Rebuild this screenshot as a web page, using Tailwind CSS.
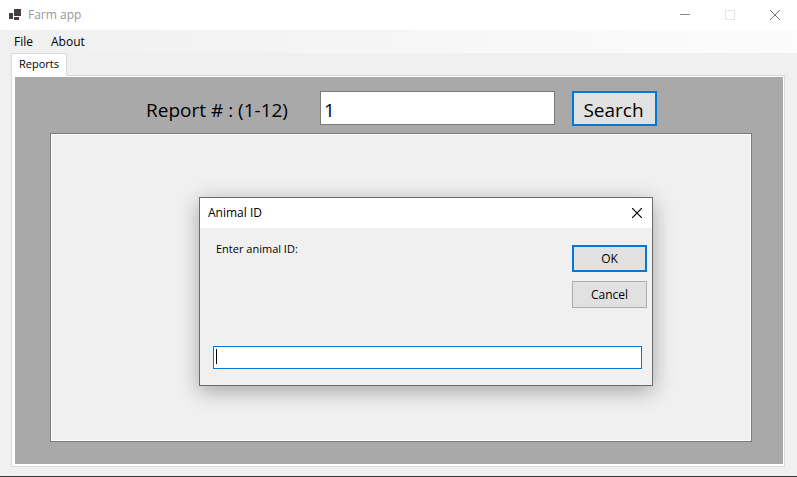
<!DOCTYPE html>
<html lang="en">
<head>
<meta charset="utf-8">
<title>Farm app</title>
<script src="https://cdn.jsdelivr.net/npm/@tailwindcss/browser@4"></script>
</head>
<body class="relative flex min-h-screen flex-col border-b border-[#333333] bg-[#f0f0f0] font-['Open_Sans','Noto_Sans',sans-serif] text-[12px] leading-4 text-black">
  <header class="flex h-[30px] items-center bg-white">
    <svg class="ml-[9px] h-3 w-3" viewBox="0 0 12 12" fill="#404040" shape-rendering="crispEdges" aria-hidden="true"><path d="M5 0h7v7H5zM0 4h4v6H0zM5 8h5v3H5z"/></svg>
    <h1 class="ml-[7px] grow text-[#999999]">Farm app</h1>
    <div class="flex h-full">
      <button type="button" aria-label="Minimize" class="flex w-[45px] items-center justify-center"><svg class="h-[10px] w-[10px]" viewBox="0 0 10 10" stroke="#888888" shape-rendering="crispEdges"><path d="M0 4.5h10"/></svg></button>
      <button type="button" aria-label="Maximize" disabled class="flex w-[45px] items-center justify-center"><svg class="h-[10px] w-[10px]" viewBox="0 0 10 10" fill="none" stroke="#e5e5e5" shape-rendering="crispEdges"><path d="M.5.5h9v9h-9z"/></svg></button>
      <button type="button" aria-label="Close" class="flex w-[45px] items-center justify-center pl-px"><svg class="h-[10px] w-[10px]" viewBox="0 0 10 10" stroke="#777777"><path d="M0 0l10 10M10 0L0 10"/></svg></button>
    </div>
  </header>
  <nav class="flex h-[23px] items-center bg-linear-to-r from-[#f0f0f0] to-[#fcfcfc] pl-[14px]">
    <button type="button" class="w-[37px] text-left">File</button>
    <button type="button">About</button>
  </nav>
  <main class="flex grow flex-col pr-3 pb-[9px] pl-[11px]">
    <div role="tablist" class="relative z-10 flex">
      <button type="button" role="tab" aria-selected="true" aria-controls="reports" id="reports-tab" class="-mb-px h-[23px] w-14 border border-b-0 border-[#d9d9d9] bg-white pb-0.5 text-center text-[11px]">Reports</button>
    </div>
    <section id="reports" role="tabpanel" aria-labelledby="reports-tab" class="flex grow flex-col border border-[#d9d9d9] bg-white pt-px pr-px pb-[2px] pl-[3px]">
      <div class="flex grow flex-col bg-[#a9a9a9] pt-[14px] pr-[31px] pb-[22px] pl-[35px]">
        <form class="flex items-start pl-24 text-[19px] leading-6">
          <label for="report" class="w-[174px] pt-[7px]">Report # : (1-12)</label>
          <input id="report" type="text" value="1" class="h-[34px] w-[235px] border border-[#7a7a7a] bg-white px-[3px] pt-1 outline-none">
          <button type="button" class="ml-[17px] h-[35px] w-[85px] border-2 border-[#0078d7] bg-[#e1e1e1] pt-0.5 pr-0.5">Search</button>
        </form>
        <div class="mt-[7px] grow border border-[#7a7a7a] bg-[#f0f0f0] p-px shadow-[inset_0_0_0_1px_white]"></div>
      </div>
    </section>
  </main>
  <div role="dialog" aria-labelledby="dialog-title" class="absolute top-[197px] left-[199px] z-20 w-[454px] border border-[#6b6b6b] bg-[#f0f0f0] shadow-[0_5px_20px_0_rgba(0,0,0,0.32)]">
    <div class="flex h-[30px] items-center justify-between bg-white pl-2">
      <h2 id="dialog-title">Animal ID</h2>
      <button type="button" aria-label="Close dialog" class="p-[10px]"><svg class="h-[10px] w-[10px]" viewBox="0 0 10 10" stroke="black" stroke-width="1.2"><path d="M0 0l10 10M10 0L0 10"/></svg></button>
    </div>
    <form class="pt-[17px] pb-4 pl-[13px]">
      <div class="flex items-start justify-between pr-[5px] pl-[3px]">
        <label for="animal" class="-mt-1 text-[11px]">Enter animal ID:</label>
        <div class="flex w-[75px] flex-col gap-[9px]">
          <button type="button" class="h-[27px] border-2 border-[#0078d7] bg-[#e1e1e1]">OK</button>
          <button type="button" class="h-[27px] border border-[#adadad] bg-[#e1e1e1]">Cancel</button>
        </div>
      </div>
      <div class="relative mt-[38px] mr-[10px]">
        <input id="animal" type="text" class="block h-[23px] w-full border border-[#0078d7] bg-white px-1 outline-none">
        <span class="absolute top-[3px] left-[3px] h-[15px] w-px bg-black" aria-hidden="true"></span>
      </div>
    </form>
  </div>
</body>
</html>
